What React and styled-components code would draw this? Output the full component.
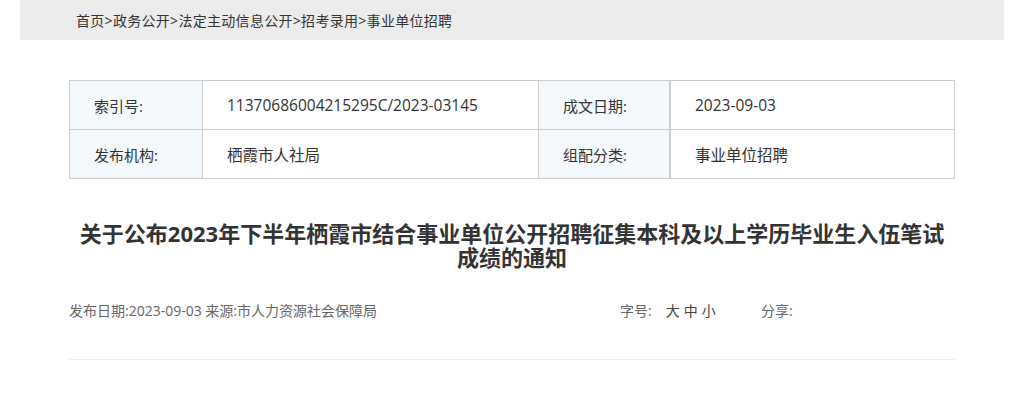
import React from 'react';
import styled, { createGlobalStyle } from 'styled-components';

const Global = createGlobalStyle`
  body {
    margin: 0;
    background: #fff;
    font-family: "Open Sans", "Noto Sans CJK SC", sans-serif;
    color: #333;
  }
`;

const Crumbs = styled.div`
  margin: 0 20px;
  height: 40px;
  background: #ececec;
  display: flex;
  align-items: center;
  padding-left: 56px;
  font-size: 14px;
  letter-spacing: 0.3px;
  color: #333;
`;

const Main = styled.div`
  width: 886px;
  margin: 40px auto 0;
`;

const InfoTable = styled.div`
  display: grid;
  grid-template-columns: 133px 336px 132px 1fr;
  grid-auto-rows: 49px;
  border-top: 1px solid #ccc;
  border-left: 1px solid #ccc;
`;

const Cell = styled.div`
  display: flex;
  align-items: center;
  padding-left: 24px;
  font-size: ${p => (p.label ? '15px' : '15.5px')};
  color: #333;
  background: ${p => (p.label ? '#f3f9fd' : '#fff')};
  border-right: ${p => (p.thick ? '2px' : '1px')} solid #ccc;
  border-bottom: 1px solid #ccc;
`;

const Title = styled.h1`
  margin: 42px 0 0;
  text-align: center;
  font-size: 22px;
  line-height: 24px;
  font-weight: 700;
  color: #333;
`;

const Meta = styled.div`
  margin-top: 32px;
  display: flex;
  align-items: center;
  font-size: 14px;
  line-height: 20px;
  color: #666;
  padding-bottom: 38px;
  border-bottom: 1px solid #eee;
`;

const Source = styled.div`
  width: 551px;
`;

const SizeBox = styled.div`
  width: 141px;
  display: flex;
  gap: 4px;
`;

const SizeLabel = styled.span`
  margin-right: 10px;
`;

const SizeLink = styled.span`
  color: #444;
`;

const Share = styled.div``;

export default function App() {
  return (
    <>
      <Global />
      <Crumbs>首页&gt;政务公开&gt;法定主动信息公开&gt;招考录用&gt;事业单位招聘</Crumbs>
      <Main>
        <InfoTable>
          <Cell label>索引号:</Cell>
          <Cell>11370686004215295C/2023-03145</Cell>
          <Cell label thick>成文日期:</Cell>
          <Cell>2023-09-03</Cell>
          <Cell label>发布机构:</Cell>
          <Cell>栖霞市人社局</Cell>
          <Cell label thick>组配分类:</Cell>
          <Cell>事业单位招聘</Cell>
        </InfoTable>
        <Title>关于公布2023年下半年栖霞市结合事业单位公开招聘征集本科及以上学历毕业生入伍笔试成绩的通知</Title>
        <Meta>
          <Source>发布日期:2023-09-03 来源:市人力资源社会保障局</Source>
          <SizeBox>
            <SizeLabel>字号:</SizeLabel>
            <SizeLink>大</SizeLink>
            <SizeLink>中</SizeLink>
            <SizeLink>小</SizeLink>
          </SizeBox>
          <Share>分享:</Share>
        </Meta>
      </Main>
    </>
  );
}
